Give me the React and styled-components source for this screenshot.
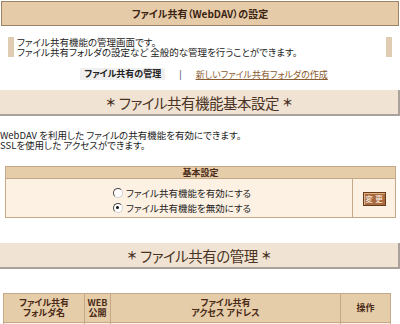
import React from 'react';
import styled, { createGlobalStyle } from 'styled-components';

const GlobalStyle = createGlobalStyle`
    body {
        margin: 0;
        background: #ffffff;
        font-family: "Noto Sans CJK JP", "DejaVu Sans", sans-serif;
        font-size: 9.5px;
        font-feature-settings: "palt";
        color: #222222;
    }
`;

const Page = styled.div`
    width: 400px;
    height: 324px;
    overflow: hidden;
    padding-top: 1px;
`;

const TitleBar = styled.div`
    margin: 0 1px 0 1px;
    height: 23px;
    border: 1px solid #9a8468;
    background: #e5cba8;
    display: flex;
    align-items: center;
    justify-content: center;
    font-weight: bold;
    font-size: 10px;
    color: #3b2412;
`;

const Intro = styled.div`
    margin: 11px 8px 0 8px;
    border-left: 6px solid #e0ccb2;
    border-right: 6px solid #e0ccb2;
    padding: 0 3px;
    line-height: 10px;
    height: 20px;
    white-space: nowrap;
`;

const Nav = styled.div`
    margin-top: 11px;
    height: 12px;
    display: flex;
    justify-content: center;
    align-items: center;
    gap: 10px;
    padding-left: 8px;
    font-size: 9px;
`;

const Current = styled.span`
    font-weight: bold;
    background: #efefef;
    padding: 0 4px;
    line-height: 12px;
    color: #222222;
`;

const Sep = styled.span`
    color: #333333;
    margin: 0 4px;
`;

const NavLink = styled.a`
    color: #8a5a30;
    text-decoration: underline;
`;

const Heading = styled.div`
    margin-top: ${(p) => p.$top}px;
    height: 24px;
    background: #f1e3d3;
    border-right: 2px solid #a9a29a;
    border-bottom: 2px solid #a9a29a;
    display: flex;
    align-items: center;
    justify-content: center;
    font-size: 14.5px;
    color: #4a3324;
    letter-spacing: -0.5px;
`;

const Star = styled.span`
    font-size: 11px;
    font-weight: bold;
    margin: 0 4px;
`;

const Paragraph = styled.p`
    margin: 14px 0 0 0;
    line-height: 10px;
    white-space: nowrap;
`;

const SettingsTable = styled.table`
    margin: 16px 0 0 5px;
    width: 391px;
    border-collapse: collapse;
    border: 1px solid #c4a888;
`;

const HeadCell = styled.th`
    background: #e6cda9;
    border: 1px solid #c4a888;
    height: ${(p) => p.$h || 11}px;
    padding: 0;
    line-height: 10px;
    font-size: 9px;
    font-weight: bold;
    color: #4a2a18;
    width: ${(p) => (p.$w ? `${p.$w}px` : 'auto')};
`;

const BodyCell = styled.td`
    background: #fdf1e3;
    border: 1px solid #c4a888;
    padding: 0;
    text-align: ${(p) => p.$align || 'center'};
    width: ${(p) => (p.$w ? `${p.$w}px` : 'auto')};
    height: ${(p) => (p.$h ? `${p.$h}px` : 'auto')};
`;

const RadioList = styled.div`
    display: inline-flex;
    flex-direction: column;
    gap: 4px;
    text-align: left;
    padding-left: 6px;
`;

const RadioRow = styled.label`
    display: flex;
    align-items: center;
    gap: 3px;
    height: 11px;
    white-space: nowrap;
`;

const Dot = styled.span`
    width: 8px;
    height: 8px;
    border-radius: 50%;
    border: 1px solid #666666;
    border-left-color: #444444;
    border-top-color: #444444;
    border-right-color: #d0d0d0;
    border-bottom-color: #d0d0d0;
    background: #ffffff;
    display: inline-flex;
    align-items: center;
    justify-content: center;
    &::after {
        content: '';
        width: 3px;
        height: 3px;
        border-radius: 50%;
        background: ${(p) => (p.$on ? '#111111' : 'transparent')};
    }
`;

const ChangeButton = styled.button`
    width: 23px;
    height: 14px;
    padding: 0;
    background: #a86a3e;
    border: 1px solid #6a3c1c;
    box-shadow: inset 1px 1px 0 #e0b080;
    color: #fff4e8;
    font-family: inherit;
    font-size: 8px;
    white-space: nowrap;
    line-height: 12px;
`;

const FolderTable = styled.table`
    margin: 24px 0 0 3px;
    width: 388px;
    border-collapse: collapse;
    border: 1px solid #c4a888;
`;

const radios = [
    { label: 'ファイル共有機能を有効にする', on: false },
    { label: 'ファイル共有機能を無効にする', on: true },
];

const App = () => {
    return (
        <Page>
            <GlobalStyle />
            <TitleBar>ファイル共有（WebDAV）の設定</TitleBar>
            <Intro>
                ファイル共有機能の管理画面です。<br />
                ファイル共有フォルダの設定など 全般的な管理を行うことができます。
            </Intro>
            <Nav>
                <Current>ファイル共有の管理</Current>
                <Sep>|</Sep>
                <NavLink>新しいファイル共有フォルダの作成</NavLink>
            </Nav>
            <Heading $top={10}>
                <Star>＊</Star>ファイル共有機能基本設定<Star>＊</Star>
            </Heading>
            <Paragraph>
                WebDAV を利用した ファイルの共有機能を有効にできます。<br />
                SSLを使用した アクセスができます。
            </Paragraph>
            <SettingsTable>
                <thead>
                    <tr>
                        <HeadCell colSpan={2} $h={11}>基本設定</HeadCell>
                    </tr>
                </thead>
                <tbody>
                    <tr>
                        <BodyCell $h={38}>
                            <RadioList>
                                {radios.map((r) => (
                                    <RadioRow key={r.label}>
                                        <Dot $on={r.on} />
                                        {r.label}
                                    </RadioRow>
                                ))}
                            </RadioList>
                        </BodyCell>
                        <BodyCell $w={42}>
                            <ChangeButton>変 更</ChangeButton>
                        </BodyCell>
                    </tr>
                </tbody>
            </SettingsTable>
            <Heading $top={25}>
                <Star>＊</Star>ファイル共有の管理<Star>＊</Star>
            </Heading>
            <FolderTable>
                <thead>
                    <tr>
                        <HeadCell $w={80} $h={28}>ファイル共有<br />フォルダ名</HeadCell>
                        <HeadCell $w={25}>WEB<br />公開</HeadCell>
                        <HeadCell>ファイル共有<br />アクセス アドレス</HeadCell>
                        <HeadCell $w={49}>操作</HeadCell>
                    </tr>
                </thead>
                <tbody>
                    <tr>
                        <BodyCell $h={10} />
                        <BodyCell />
                        <BodyCell />
                        <BodyCell />
                    </tr>
                </tbody>
            </FolderTable>
        </Page>
    );
};

export default App;
